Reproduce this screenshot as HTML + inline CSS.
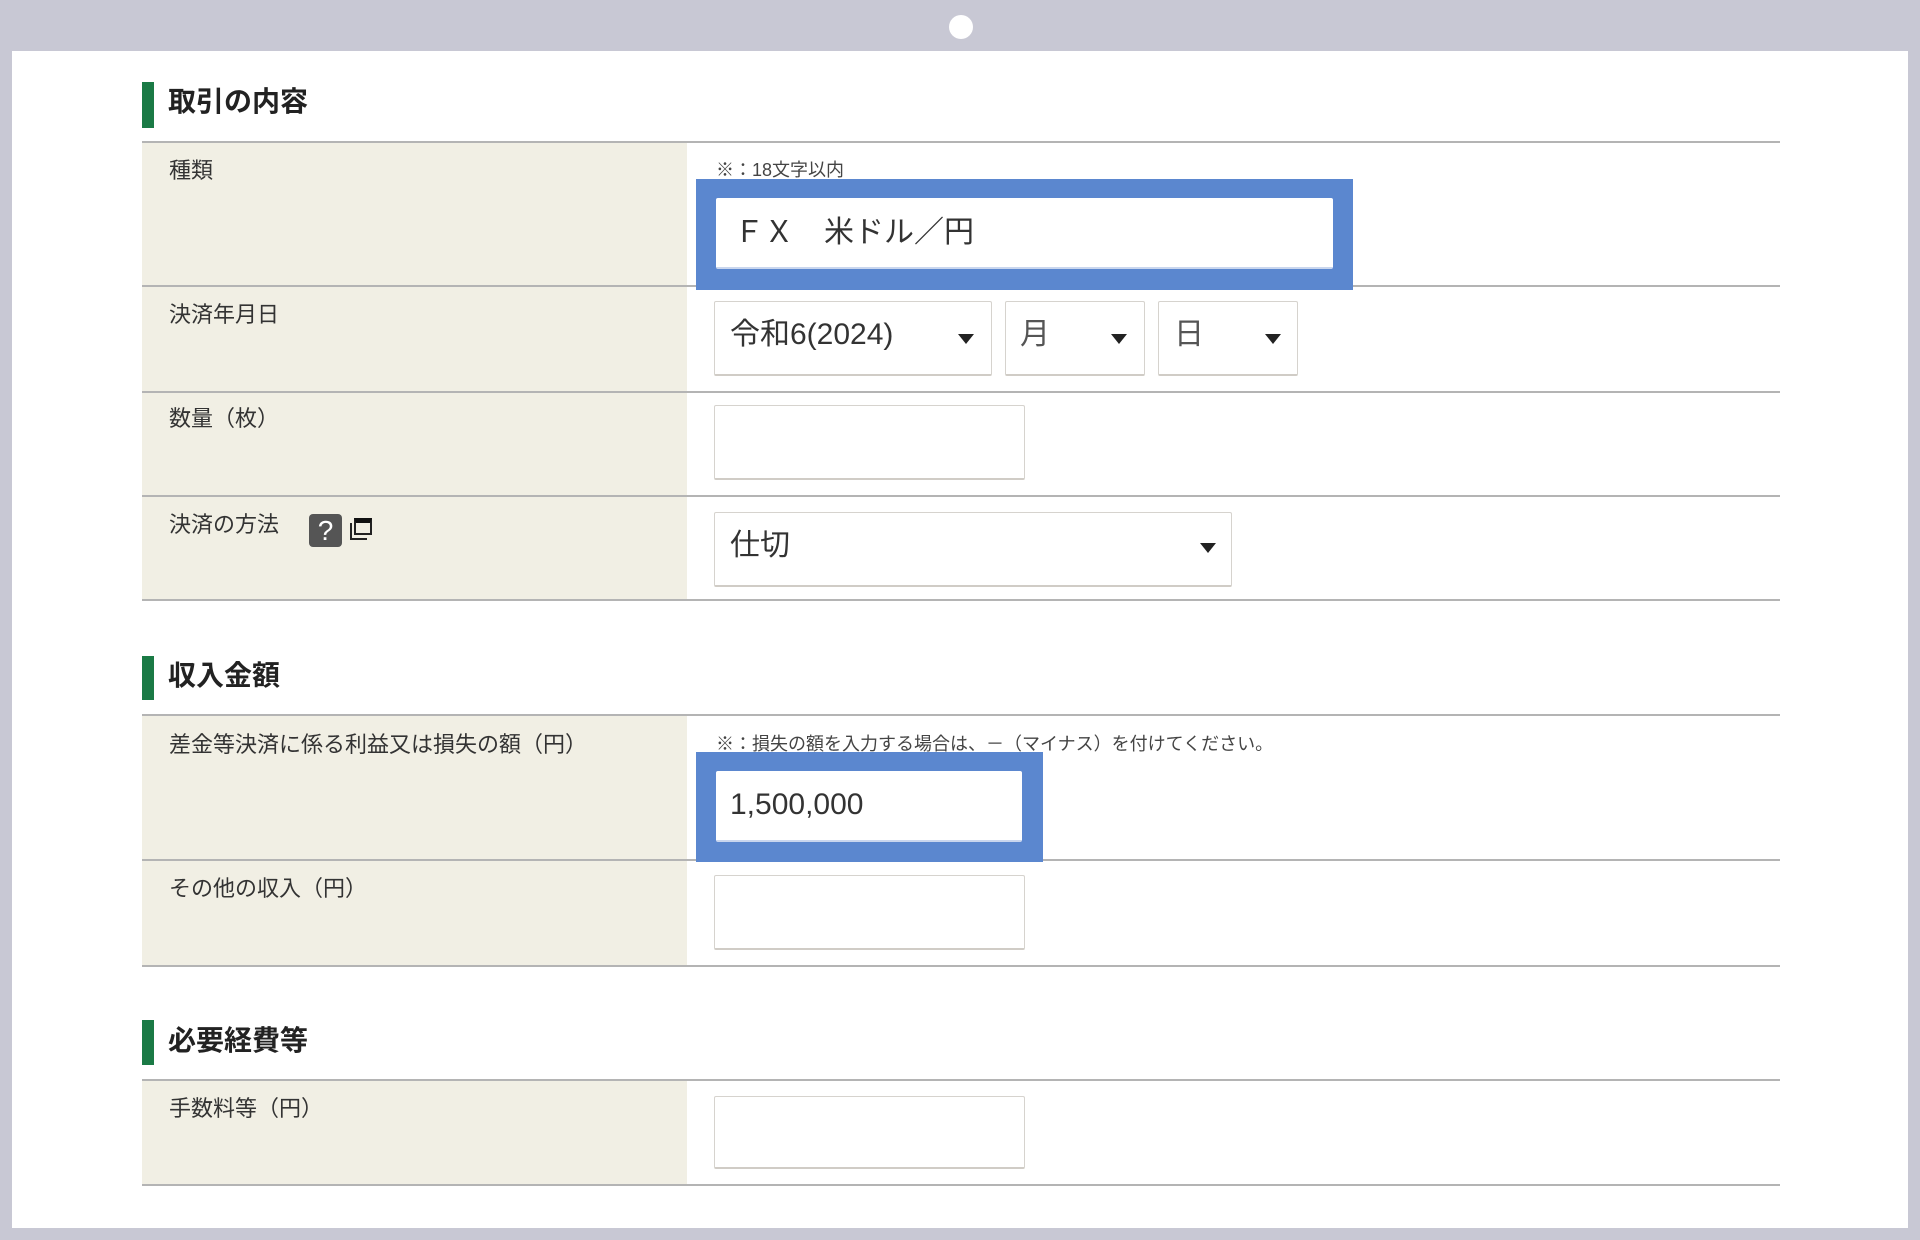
<!DOCTYPE html>
<html><head><meta charset="utf-8"><style>
*{margin:0;padding:0;box-sizing:border-box}
body{width:1920px;height:1240px;background:#c8c8d4;position:relative;overflow:hidden;font-family:"Liberation Sans","Noto Sans CJK JP",sans-serif;color:#333}
div,span{position:absolute}
.panel{left:12px;top:51px;width:1896px;height:1177px;background:#fff}
.dot{left:949px;top:15px;width:24px;height:24px;border-radius:50%;background:#fff}
.bar{left:142px;width:12px;background:#1a7a45}
.h{left:168px;font-size:28px;font-weight:bold;color:#222;line-height:1}
.line{left:142px;width:1638px;height:2px;background:#b4b4b4}
.lab{left:142px;width:545px;background:#f1efe4}
.lt{left:169px;font-size:22px;line-height:1;color:#333}
.note{left:716px;font-size:18px;line-height:1;color:#444}
.inp{background:#fff;border:1px solid #d6d3ce;border-bottom:2px solid #d0ccc6;border-radius:2px}
.blue{background:#5b87cf}
.tx{font-size:30px;line-height:1;color:#333}
.arr{width:0;height:0;border-left:8px solid transparent;border-right:8px solid transparent;border-top:10px solid #222}
</style></head><body>
<div class="dot"></div>
<div class="panel"></div>

<div class="bar" style="top:82px;height:46px"></div>
<div class="h" style="top:88px">取引の内容</div>

<div class="lab" style="top:142px;height:458px"></div>
<div class="line" style="top:141px"></div>
<div class="line" style="top:285px"></div>
<div class="line" style="top:391px"></div>
<div class="line" style="top:495px"></div>
<div class="line" style="top:599px"></div>

<div class="lt" style="top:160px">種類</div>
<div class="note" style="top:161px">※：18文字以内</div>
<div class="blue" style="left:696px;top:179px;width:657px;height:111px"></div>
<div class="inp" style="left:716px;top:198px;width:617px;height:71px;border:none;border-bottom:2px solid #c9d6ee"></div>
<div class="tx" style="left:734px;top:218px">ＦＸ　米ドル／円</div>

<div class="lt" style="top:304px">決済年月日</div>
<div class="inp" style="left:714px;top:301px;width:278px;height:75px"></div>
<div class="tx" style="left:730px;top:320px">令和6(2024)</div>
<div class="arr" style="left:958px;top:334px"></div>
<div class="inp" style="left:1005px;top:301px;width:140px;height:75px"></div>
<div class="tx" style="left:1020px;top:320px;color:#555">月</div>
<div class="arr" style="left:1111px;top:334px"></div>
<div class="inp" style="left:1158px;top:301px;width:140px;height:75px"></div>
<div class="tx" style="left:1174px;top:320px;color:#555">日</div>
<div class="arr" style="left:1265px;top:334px"></div>

<div class="lt" style="top:408px">数量（枚）</div>
<div class="inp" style="left:714px;top:405px;width:311px;height:75px"></div>

<div class="lt" style="top:514px">決済の方法</div>
<div style="left:309px;top:514px;width:33px;height:33px;background:#555;border-radius:4px;color:#fff;font-size:28px;line-height:33px;text-align:center">?</div>
<div style="left:350px;top:523px;width:17px;height:17px;border-left:2px solid #222;border-bottom:2px solid #222"></div>
<div style="left:354px;top:518px;width:18px;height:17px;border:2px solid #222;border-top:5px solid #111;background:#f1efe4"></div>
<div class="inp" style="left:714px;top:512px;width:518px;height:75px"></div>
<div class="tx" style="left:730px;top:531px">仕切</div>
<div class="arr" style="left:1200px;top:543px"></div>

<div class="bar" style="top:656px;height:44px"></div>
<div class="h" style="top:662px">収入金額</div>

<div class="lab" style="top:715px;height:251px"></div>
<div class="line" style="top:714px"></div>
<div class="line" style="top:859px"></div>
<div class="line" style="top:965px"></div>

<div class="lt" style="top:734px">差金等決済に係る利益又は損失の額（円）</div>
<div class="note" style="top:735px">※：損失の額を入力する場合は、－（マイナス）を付けてください。</div>
<div class="blue" style="left:696px;top:752px;width:347px;height:110px"></div>
<div class="inp" style="left:716px;top:771px;width:306px;height:71px;border:none;border-bottom:2px solid #c9d6ee"></div>
<div class="tx" style="left:730px;top:790px">1,500,000</div>

<div class="lt" style="top:878px">その他の収入（円）</div>
<div class="inp" style="left:714px;top:875px;width:311px;height:75px"></div>

<div class="bar" style="top:1020px;height:45px"></div>
<div class="h" style="top:1027px">必要経費等</div>

<div class="lab" style="top:1080px;height:105px"></div>
<div class="line" style="top:1079px"></div>
<div class="line" style="top:1184px"></div>
<div class="lt" style="top:1098px">手数料等（円）</div>
<div class="inp" style="left:714px;top:1096px;width:311px;height:73px"></div>
</body></html>
